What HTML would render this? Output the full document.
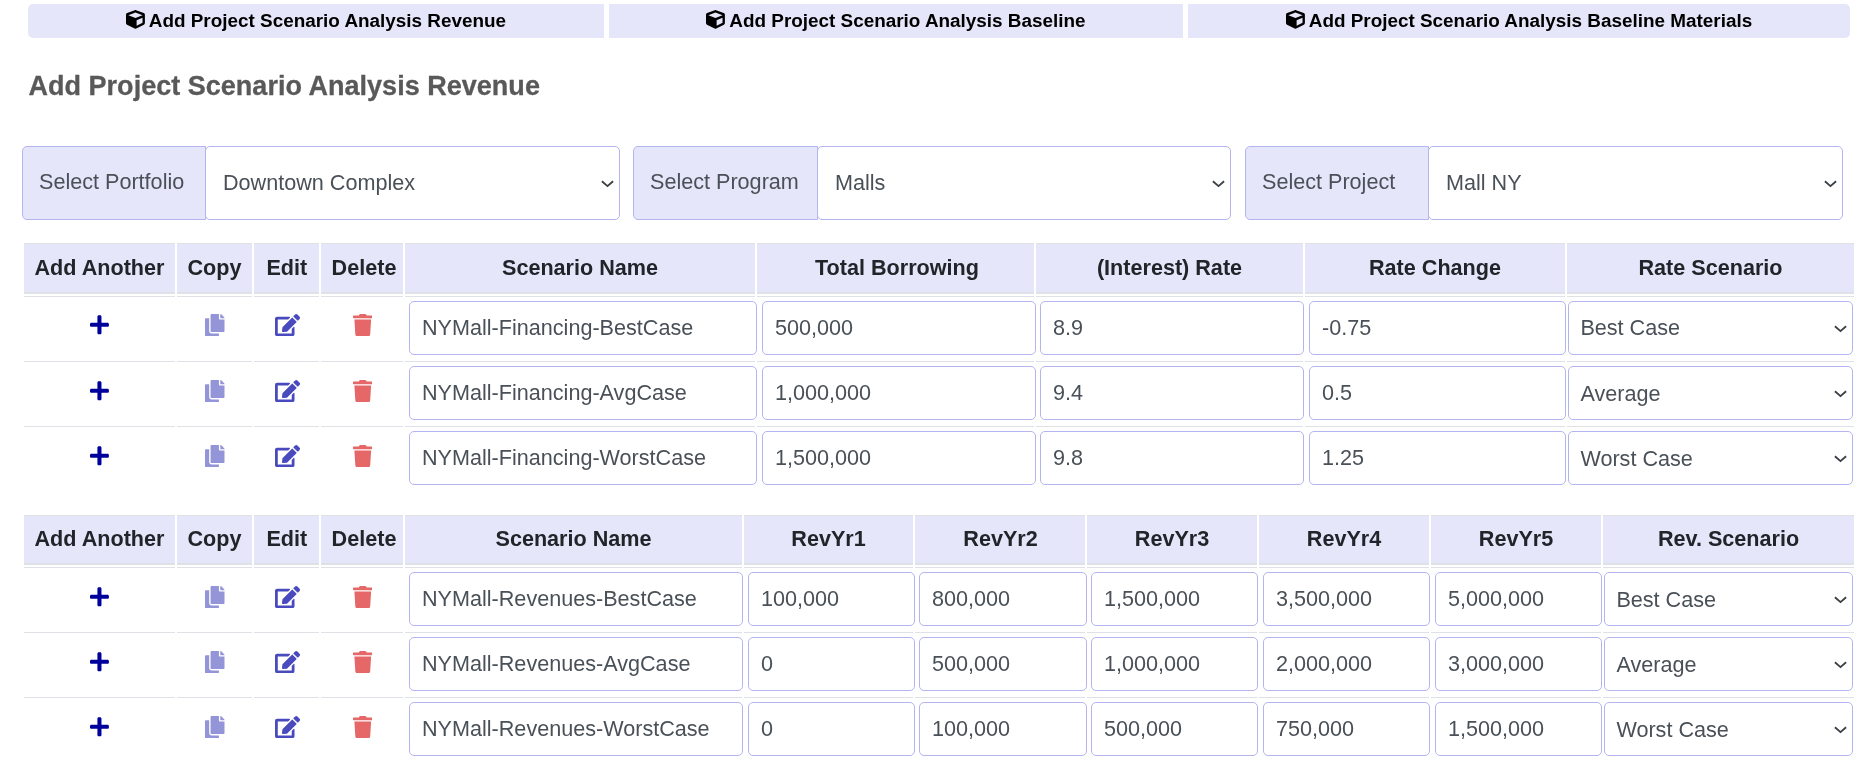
<!DOCTYPE html>
<html lang="en"><head><meta charset="utf-8"><title>Add Project Scenario Analysis Revenue</title>
<style>
*{box-sizing:border-box}
html,body{margin:0;padding:0}
body{width:1866px;height:766px;overflow:hidden;background:#fff;}
#app{position:absolute;left:0;top:0;width:1866px;height:766px;will-change:transform;font-family:"Liberation Sans",Arial,sans-serif;font-size:21.6px;color:#212529}
.ic{display:block}
.ic path{fill:currentColor}
.tabs{position:absolute;left:28px;top:4px;height:34px;display:flex;gap:5px}
.tab{height:34px;background:#e6e6fa;color:#000;font-weight:bold;font-size:18.9px;display:flex;align-items:center;justify-content:center;white-space:nowrap}
.tab .ic{margin-right:4px;position:relative;top:-1.6px}
.tab:first-child{border-radius:5px 0 0 5px}
.tab:last-child{border-radius:0 5px 5px 0}
h1{position:absolute;left:28.5px;top:67px;margin:0;font-size:27px;line-height:38px;font-weight:bold;color:#595959;white-space:nowrap;-webkit-text-stroke:0.3px #595959;letter-spacing:0.02px}
.grp{position:absolute;top:146px;height:74px;display:flex}
.grp .lbl{width:184px;height:74px;background:#e6e6fa;border:1px solid #b4b4f0;border-radius:5px 0 0 5px;color:#495057;padding-left:16px;line-height:70px;white-space:nowrap}
.grp .sel{position:relative;margin-left:-1px;flex:1;height:74px;background:#fff;border:1px solid #b4b4f0;border-radius:5px;color:#495057;padding-left:17px;line-height:72px;white-space:nowrap}
.chev{position:absolute;right:5px;top:50%;margin-top:-3px}
table{position:absolute;left:22px;border-collapse:separate;border-spacing:2px;table-layout:fixed;margin:0}
th{background:#e6e6fa;border-top:1px solid #dee2e6;border-bottom:2px solid #dee2e6;height:51px;padding:0;font-weight:bold;text-align:center;line-height:30px;color:#212529;white-space:nowrap;vertical-align:middle}
td{border-top:1px solid #dee2e6;height:63px;padding:0;position:relative;vertical-align:top}
td .ic{margin:18px auto 0}
tr.r0 td .ic{margin-top:17px}
.plus{color:#00009c}
td .copy{position:relative;left:.5px}td .edit{position:relative;left:1.2px}td .trash{position:relative;left:.4px}.copy{color:#9494d8}.edit{color:#4a4abf}.trash{color:#e66767}
.inp{position:absolute;left:4px;top:4px;height:54px;background:#fff;border:1px solid #b4b4f0;border-radius:5px;color:#495057;padding-left:12px;line-height:52px;white-space:nowrap;overflow:hidden}
.inp.s{padding-left:11.4px;line-height:54px}
tr.r0 .inp.s{line-height:52px}
.inp .chev{right:5px}
</style></head>
<body>
<div id="app">
<div class="tabs"><div class="tab" style="width:576px"><svg class="ic " viewBox="0 0 512 512" width="18.90" height="18.90"><path d="M239.1 6.3l-208 78c-18.7 7-31.1 25-31.1 45v225.1c0 18.2 10.3 34.8 26.5 42.9l208 104c13.5 6.8 29.4 6.8 42.9 0l208-104c16.300-8.1 26.5-24.8 26.5-42.9V129.300c0-20-12.400-37.900-31.100-44.900l-208-78C262 2.200 250 2.200 239.100 6.300zM256 68.400l192 72v1.100l-192 78-192-78v-1.100l192-72zm32 356V275.500l160-65v133.900l-160 80z"/></svg><span>Add Project Scenario Analysis Revenue</span></div><div class="tab" style="width:574px"><svg class="ic " viewBox="0 0 512 512" width="18.90" height="18.90"><path d="M239.1 6.3l-208 78c-18.7 7-31.1 25-31.1 45v225.1c0 18.2 10.3 34.8 26.5 42.9l208 104c13.5 6.8 29.4 6.8 42.9 0l208-104c16.300-8.1 26.5-24.8 26.5-42.9V129.300c0-20-12.400-37.900-31.100-44.900l-208-78C262 2.200 250 2.200 239.100 6.300zM256 68.400l192 72v1.100l-192 78-192-78v-1.100l192-72zm32 356V275.500l160-65v133.900l-160 80z"/></svg><span>Add Project Scenario Analysis Baseline</span></div><div class="tab" style="width:662px"><svg class="ic " viewBox="0 0 512 512" width="18.90" height="18.90"><path d="M239.1 6.3l-208 78c-18.7 7-31.1 25-31.1 45v225.1c0 18.2 10.3 34.8 26.5 42.9l208 104c13.5 6.8 29.4 6.8 42.9 0l208-104c16.300-8.1 26.5-24.8 26.5-42.9V129.300c0-20-12.400-37.900-31.100-44.900l-208-78C262 2.200 250 2.200 239.100 6.300zM256 68.400l192 72v1.100l-192 78-192-78v-1.100l192-72zm32 356V275.500l160-65v133.900l-160 80z"/></svg><span>Add Project Scenario Analysis Baseline Materials</span></div></div>
<h1>Add Project Scenario Analysis Revenue</h1>
<div class="grp" style="left:22px;width:598px"><div class="lbl" style="width:184px">Select Portfolio</div><div class="sel">Downtown Complex<svg class="chev" viewBox="0 0 13 8" width="13" height="8"><path d="M0.9 1.3 L6.5 6.1 L12.1 1.3" fill="none" stroke="#3a4046" stroke-width="1.9" stroke-linecap="butt" stroke-linejoin="miter"/></svg></div></div>
<div class="grp" style="left:633px;width:598px"><div class="lbl" style="width:185px">Select Program</div><div class="sel">Malls<svg class="chev" viewBox="0 0 13 8" width="13" height="8"><path d="M0.9 1.3 L6.5 6.1 L12.1 1.3" fill="none" stroke="#3a4046" stroke-width="1.9" stroke-linecap="butt" stroke-linejoin="miter"/></svg></div></div>
<div class="grp" style="left:1245px;width:598px"><div class="lbl" style="width:184px">Select Project</div><div class="sel">Mall NY<svg class="chev" viewBox="0 0 13 8" width="13" height="8"><path d="M0.9 1.3 L6.5 6.1 L12.1 1.3" fill="none" stroke="#3a4046" stroke-width="1.9" stroke-linecap="butt" stroke-linejoin="miter"/></svg></div></div>
<table style="top:241px"><colgroup><col style="width:151px"><col style="width:75px"><col style="width:65px"><col style="width:82px"><col style="width:350px"><col style="width:277px"><col style="width:267px"><col style="width:260px"><col style="width:287px"></colgroup>
<thead><tr><th style="height:51px;">Add Another</th><th style="height:51px;">Copy</th><th style="height:51px;padding-left:.6px">Edit</th><th style="height:51px;padding-left:4px">Delete</th><th style="height:51px;">Scenario Name</th><th style="height:51px;padding-left:3px">Total Borrowing</th><th style="height:51px;">(Interest) Rate</th><th style="height:51px;">Rate Change</th><th style="height:51px;">Rate Scenario</th></tr></thead>
<tbody>
<tr class="r0"><td><svg class="ic plus" viewBox="0 0 448 512" width="18.90" height="21.60"><path d="M416 208H272V64c0-17.67-14.33-32-32-32h-32c-17.67 0-32 14.33-32 32v144H32c-17.67 0-32 14.33-32 32v32c0 17.67 14.33 32 32 32h144v144c0 17.67 14.33 32 32 32h32c17.67 0 32-14.33 32-32V304h144c17.67 0 32-14.33 32-32v-32c0-17.67-14.33-32-32-32z"/></svg></td><td><svg class="ic copy" viewBox="0 0 448 512" width="19.51" height="22.30"><path d="M320 448v40c0 13.255-10.745 24-24 24H24c-13.255 0-24-10.745-24-24V120c0-13.255 10.745-24 24-24h72v296c0 30.879 25.121 56 56 56h168zm0-344V0H152c-13.255 0-24 10.745-24 24v368c0 13.255 10.745 24 24 24h272c13.255 0 24-10.745 24-24V128H344c-13.200 0-24-10.800-24-24zm120.971-31.029L375.029 7.029A24 24 0 0 0 358.059 0H352v96h96v-6.059a24 24 0 0 0-7.029-16.970z"/></svg></td><td><svg class="ic edit" viewBox="0 0 576 512" width="25.09" height="22.30"><path d="M402.600 83.200l90.200 90.200c3.800 3.800 3.800 10 0 13.800L274.400 405.600l-92.800 10.300c-12.400 1.400-22.900-9.100-21.500-21.500l10.300-92.800L388.800 83.200c3.800-3.800 10-3.800 13.800 0zm162-22.900l-48.800-48.800c-15.200-15.200-39.900-15.200-55.200 0l-35.400 35.400c-3.800 3.800-3.800 10 0 13.800l90.200 90.200c3.800 3.800 10 3.800 13.800 0l35.400-35.400c15.200-15.300 15.200-40 0-55.200zM384 346.200V448H64V128h229.800c3.200 0 6.200-1.300 8.500-3.500l40-40c7.600-7.600 2.200-20.500-8.500-20.500H48C21.500 64 0 85.500 0 112v352c0 26.500 21.500 48 48 48h352c26.500 0 48-21.500 48-48V306.200c0-10.700-12.900-16-20.500-8.500l-40 40c-2.200 2.300-3.500 5.300-3.500 8.500z"/></svg></td><td><svg class="ic trash" viewBox="0 0 448 512" width="19.51" height="22.30"><path d="M432 32H312l-9.400-18.700A24 24 0 0 0 281.100 0H166.800a23.720 23.720 0 0 0-21.400 13.300L136 32H16A16 16 0 0 0 0 48v32a16 16 0 0 0 16 16h416a16 16 0 0 0 16-16V48a16 16 0 0 0-16-16zM53.200 467a48 48 0 0 0 47.900 45h245.800a48 48 0 0 0 47.900-45L416 128H32z"/></svg></td><td><div class="inp" style="left:4px;width:348px">NYMall-Financing-BestCase</div></td><td><div class="inp" style="left:5px;width:274px">500,000</div></td><td><div class="inp" style="left:4px;width:264px">8.9</div></td><td><div class="inp" style="left:4px;width:257px">-0.75</div></td><td><div class="inp s" style="left:1px;width:285px">Best Case<svg class="chev" viewBox="0 0 13 8" width="13" height="8"><path d="M0.9 1.3 L6.5 6.1 L12.1 1.3" fill="none" stroke="#3a4046" stroke-width="1.9" stroke-linecap="butt" stroke-linejoin="miter"/></svg></div></td></tr>
<tr><td><svg class="ic plus" viewBox="0 0 448 512" width="18.90" height="21.60"><path d="M416 208H272V64c0-17.67-14.33-32-32-32h-32c-17.67 0-32 14.33-32 32v144H32c-17.67 0-32 14.33-32 32v32c0 17.67 14.33 32 32 32h144v144c0 17.67 14.33 32 32 32h32c17.67 0 32-14.33 32-32V304h144c17.67 0 32-14.33 32-32v-32c0-17.67-14.33-32-32-32z"/></svg></td><td><svg class="ic copy" viewBox="0 0 448 512" width="19.51" height="22.30"><path d="M320 448v40c0 13.255-10.745 24-24 24H24c-13.255 0-24-10.745-24-24V120c0-13.255 10.745-24 24-24h72v296c0 30.879 25.121 56 56 56h168zm0-344V0H152c-13.255 0-24 10.745-24 24v368c0 13.255 10.745 24 24 24h272c13.255 0 24-10.745 24-24V128H344c-13.200 0-24-10.800-24-24zm120.971-31.029L375.029 7.029A24 24 0 0 0 358.059 0H352v96h96v-6.059a24 24 0 0 0-7.029-16.970z"/></svg></td><td><svg class="ic edit" viewBox="0 0 576 512" width="25.09" height="22.30"><path d="M402.600 83.200l90.200 90.200c3.800 3.800 3.800 10 0 13.800L274.400 405.600l-92.800 10.300c-12.400 1.400-22.900-9.100-21.500-21.500l10.300-92.800L388.800 83.200c3.800-3.800 10-3.800 13.800 0zm162-22.900l-48.800-48.800c-15.200-15.200-39.900-15.200-55.200 0l-35.400 35.400c-3.800 3.800-3.800 10 0 13.800l90.200 90.200c3.800 3.800 10 3.800 13.800 0l35.400-35.400c15.200-15.300 15.200-40 0-55.200zM384 346.200V448H64V128h229.800c3.200 0 6.200-1.300 8.500-3.500l40-40c7.600-7.600 2.200-20.500-8.500-20.500H48C21.500 64 0 85.500 0 112v352c0 26.500 21.500 48 48 48h352c26.500 0 48-21.500 48-48V306.200c0-10.700-12.900-16-20.500-8.500l-40 40c-2.200 2.300-3.500 5.300-3.500 8.500z"/></svg></td><td><svg class="ic trash" viewBox="0 0 448 512" width="19.51" height="22.30"><path d="M432 32H312l-9.400-18.700A24 24 0 0 0 281.100 0H166.800a23.720 23.720 0 0 0-21.400 13.300L136 32H16A16 16 0 0 0 0 48v32a16 16 0 0 0 16 16h416a16 16 0 0 0 16-16V48a16 16 0 0 0-16-16zM53.200 467a48 48 0 0 0 47.900 45h245.800a48 48 0 0 0 47.900-45L416 128H32z"/></svg></td><td><div class="inp" style="left:4px;width:348px">NYMall-Financing-AvgCase</div></td><td><div class="inp" style="left:5px;width:274px">1,000,000</div></td><td><div class="inp" style="left:4px;width:264px">9.4</div></td><td><div class="inp" style="left:4px;width:257px">0.5</div></td><td><div class="inp s" style="left:1px;width:285px">Average<svg class="chev" viewBox="0 0 13 8" width="13" height="8"><path d="M0.9 1.3 L6.5 6.1 L12.1 1.3" fill="none" stroke="#3a4046" stroke-width="1.9" stroke-linecap="butt" stroke-linejoin="miter"/></svg></div></td></tr>
<tr><td><svg class="ic plus" viewBox="0 0 448 512" width="18.90" height="21.60"><path d="M416 208H272V64c0-17.67-14.33-32-32-32h-32c-17.67 0-32 14.33-32 32v144H32c-17.67 0-32 14.33-32 32v32c0 17.67 14.33 32 32 32h144v144c0 17.67 14.33 32 32 32h32c17.67 0 32-14.33 32-32V304h144c17.67 0 32-14.33 32-32v-32c0-17.67-14.33-32-32-32z"/></svg></td><td><svg class="ic copy" viewBox="0 0 448 512" width="19.51" height="22.30"><path d="M320 448v40c0 13.255-10.745 24-24 24H24c-13.255 0-24-10.745-24-24V120c0-13.255 10.745-24 24-24h72v296c0 30.879 25.121 56 56 56h168zm0-344V0H152c-13.255 0-24 10.745-24 24v368c0 13.255 10.745 24 24 24h272c13.255 0 24-10.745 24-24V128H344c-13.200 0-24-10.800-24-24zm120.971-31.029L375.029 7.029A24 24 0 0 0 358.059 0H352v96h96v-6.059a24 24 0 0 0-7.029-16.970z"/></svg></td><td><svg class="ic edit" viewBox="0 0 576 512" width="25.09" height="22.30"><path d="M402.600 83.200l90.200 90.200c3.800 3.800 3.800 10 0 13.800L274.400 405.600l-92.800 10.300c-12.400 1.400-22.900-9.100-21.500-21.500l10.300-92.800L388.800 83.200c3.800-3.800 10-3.800 13.800 0zm162-22.900l-48.800-48.800c-15.200-15.200-39.900-15.200-55.200 0l-35.400 35.400c-3.800 3.800-3.800 10 0 13.800l90.200 90.200c3.800 3.800 10 3.800 13.800 0l35.400-35.400c15.200-15.300 15.200-40 0-55.200zM384 346.200V448H64V128h229.800c3.200 0 6.200-1.300 8.500-3.500l40-40c7.600-7.600 2.200-20.500-8.500-20.500H48C21.500 64 0 85.500 0 112v352c0 26.500 21.500 48 48 48h352c26.500 0 48-21.500 48-48V306.200c0-10.700-12.900-16-20.500-8.500l-40 40c-2.200 2.300-3.500 5.300-3.500 8.500z"/></svg></td><td><svg class="ic trash" viewBox="0 0 448 512" width="19.51" height="22.30"><path d="M432 32H312l-9.400-18.700A24 24 0 0 0 281.100 0H166.800a23.720 23.720 0 0 0-21.400 13.300L136 32H16A16 16 0 0 0 0 48v32a16 16 0 0 0 16 16h416a16 16 0 0 0 16-16V48a16 16 0 0 0-16-16zM53.200 467a48 48 0 0 0 47.900 45h245.800a48 48 0 0 0 47.900-45L416 128H32z"/></svg></td><td><div class="inp" style="left:4px;width:348px">NYMall-Financing-WorstCase</div></td><td><div class="inp" style="left:5px;width:274px">1,500,000</div></td><td><div class="inp" style="left:4px;width:264px">9.8</div></td><td><div class="inp" style="left:4px;width:257px">1.25</div></td><td><div class="inp s" style="left:1px;width:285px">Worst Case<svg class="chev" viewBox="0 0 13 8" width="13" height="8"><path d="M0.9 1.3 L6.5 6.1 L12.1 1.3" fill="none" stroke="#3a4046" stroke-width="1.9" stroke-linecap="butt" stroke-linejoin="miter"/></svg></div></td></tr>
</tbody></table>
<table style="top:513px"><colgroup><col style="width:151px"><col style="width:75px"><col style="width:65px"><col style="width:82px"><col style="width:337px"><col style="width:169px"><col style="width:170px"><col style="width:170px"><col style="width:170px"><col style="width:170px"><col style="width:251px"></colgroup>
<thead><tr><th style="height:50px;padding-bottom:2px;">Add Another</th><th style="height:50px;padding-bottom:2px;">Copy</th><th style="height:50px;padding-bottom:2px;padding-left:.6px">Edit</th><th style="height:50px;padding-bottom:2px;padding-left:4px">Delete</th><th style="height:50px;padding-bottom:2px;">Scenario Name</th><th style="height:50px;padding-bottom:2px;">RevYr1</th><th style="height:50px;padding-bottom:2px;padding-left:1px">RevYr2</th><th style="height:50px;padding-bottom:2px;">RevYr3</th><th style="height:50px;padding-bottom:2px;">RevYr4</th><th style="height:50px;padding-bottom:2px;">RevYr5</th><th style="height:50px;padding-bottom:2px;">Rev. Scenario</th></tr></thead>
<tbody>
<tr><td><svg class="ic plus" viewBox="0 0 448 512" width="18.90" height="21.60"><path d="M416 208H272V64c0-17.67-14.33-32-32-32h-32c-17.67 0-32 14.33-32 32v144H32c-17.67 0-32 14.33-32 32v32c0 17.67 14.33 32 32 32h144v144c0 17.67 14.33 32 32 32h32c17.67 0 32-14.33 32-32V304h144c17.67 0 32-14.33 32-32v-32c0-17.67-14.33-32-32-32z"/></svg></td><td><svg class="ic copy" viewBox="0 0 448 512" width="19.51" height="22.30"><path d="M320 448v40c0 13.255-10.745 24-24 24H24c-13.255 0-24-10.745-24-24V120c0-13.255 10.745-24 24-24h72v296c0 30.879 25.121 56 56 56h168zm0-344V0H152c-13.255 0-24 10.745-24 24v368c0 13.255 10.745 24 24 24h272c13.255 0 24-10.745 24-24V128H344c-13.200 0-24-10.800-24-24zm120.971-31.029L375.029 7.029A24 24 0 0 0 358.059 0H352v96h96v-6.059a24 24 0 0 0-7.029-16.970z"/></svg></td><td><svg class="ic edit" viewBox="0 0 576 512" width="25.09" height="22.30"><path d="M402.600 83.200l90.200 90.200c3.800 3.800 3.800 10 0 13.800L274.400 405.600l-92.800 10.300c-12.400 1.400-22.900-9.100-21.500-21.500l10.300-92.800L388.800 83.200c3.800-3.800 10-3.800 13.800 0zm162-22.900l-48.800-48.800c-15.200-15.200-39.900-15.200-55.200 0l-35.400 35.400c-3.800 3.800-3.800 10 0 13.800l90.200 90.200c3.800 3.800 10 3.800 13.800 0l35.400-35.400c15.200-15.300 15.200-40 0-55.200zM384 346.200V448H64V128h229.800c3.200 0 6.200-1.300 8.500-3.500l40-40c7.600-7.600 2.200-20.500-8.500-20.500H48C21.500 64 0 85.500 0 112v352c0 26.500 21.500 48 48 48h352c26.500 0 48-21.500 48-48V306.200c0-10.700-12.900-16-20.500-8.500l-40 40c-2.200 2.300-3.500 5.300-3.500 8.500z"/></svg></td><td><svg class="ic trash" viewBox="0 0 448 512" width="19.51" height="22.30"><path d="M432 32H312l-9.400-18.700A24 24 0 0 0 281.100 0H166.800a23.720 23.720 0 0 0-21.400 13.300L136 32H16A16 16 0 0 0 0 48v32a16 16 0 0 0 16 16h416a16 16 0 0 0 16-16V48a16 16 0 0 0-16-16zM53.200 467a48 48 0 0 0 47.900 45h245.800a48 48 0 0 0 47.900-45L416 128H32z"/></svg></td><td><div class="inp" style="left:4px;width:334px">NYMall-Revenues-BestCase</div></td><td><div class="inp" style="left:4px;width:167px">100,000</div></td><td><div class="inp" style="left:4px;width:168px">800,000</div></td><td><div class="inp" style="left:4px;width:167px">1,500,000</div></td><td><div class="inp" style="left:4px;width:167px">3,500,000</div></td><td><div class="inp" style="left:4px;width:167px">5,000,000</div></td><td><div class="inp s" style="left:1px;width:249px">Best Case<svg class="chev" viewBox="0 0 13 8" width="13" height="8"><path d="M0.9 1.3 L6.5 6.1 L12.1 1.3" fill="none" stroke="#3a4046" stroke-width="1.9" stroke-linecap="butt" stroke-linejoin="miter"/></svg></div></td></tr>
<tr><td><svg class="ic plus" viewBox="0 0 448 512" width="18.90" height="21.60"><path d="M416 208H272V64c0-17.67-14.33-32-32-32h-32c-17.67 0-32 14.33-32 32v144H32c-17.67 0-32 14.33-32 32v32c0 17.67 14.33 32 32 32h144v144c0 17.67 14.33 32 32 32h32c17.67 0 32-14.33 32-32V304h144c17.67 0 32-14.33 32-32v-32c0-17.67-14.33-32-32-32z"/></svg></td><td><svg class="ic copy" viewBox="0 0 448 512" width="19.51" height="22.30"><path d="M320 448v40c0 13.255-10.745 24-24 24H24c-13.255 0-24-10.745-24-24V120c0-13.255 10.745-24 24-24h72v296c0 30.879 25.121 56 56 56h168zm0-344V0H152c-13.255 0-24 10.745-24 24v368c0 13.255 10.745 24 24 24h272c13.255 0 24-10.745 24-24V128H344c-13.200 0-24-10.800-24-24zm120.971-31.029L375.029 7.029A24 24 0 0 0 358.059 0H352v96h96v-6.059a24 24 0 0 0-7.029-16.970z"/></svg></td><td><svg class="ic edit" viewBox="0 0 576 512" width="25.09" height="22.30"><path d="M402.600 83.200l90.200 90.200c3.800 3.800 3.800 10 0 13.800L274.400 405.600l-92.800 10.300c-12.400 1.400-22.900-9.100-21.500-21.500l10.300-92.800L388.800 83.200c3.800-3.800 10-3.800 13.800 0zm162-22.900l-48.800-48.800c-15.200-15.200-39.900-15.200-55.200 0l-35.400 35.400c-3.800 3.800-3.800 10 0 13.800l90.200 90.200c3.800 3.800 10 3.800 13.800 0l35.400-35.400c15.200-15.300 15.200-40 0-55.200zM384 346.200V448H64V128h229.800c3.200 0 6.200-1.300 8.500-3.500l40-40c7.600-7.600 2.200-20.500-8.500-20.500H48C21.500 64 0 85.500 0 112v352c0 26.500 21.500 48 48 48h352c26.500 0 48-21.500 48-48V306.200c0-10.700-12.900-16-20.500-8.500l-40 40c-2.200 2.300-3.500 5.300-3.500 8.500z"/></svg></td><td><svg class="ic trash" viewBox="0 0 448 512" width="19.51" height="22.30"><path d="M432 32H312l-9.400-18.700A24 24 0 0 0 281.100 0H166.800a23.720 23.720 0 0 0-21.400 13.300L136 32H16A16 16 0 0 0 0 48v32a16 16 0 0 0 16 16h416a16 16 0 0 0 16-16V48a16 16 0 0 0-16-16zM53.200 467a48 48 0 0 0 47.900 45h245.800a48 48 0 0 0 47.900-45L416 128H32z"/></svg></td><td><div class="inp" style="left:4px;width:334px">NYMall-Revenues-AvgCase</div></td><td><div class="inp" style="left:4px;width:167px">0</div></td><td><div class="inp" style="left:4px;width:168px">500,000</div></td><td><div class="inp" style="left:4px;width:167px">1,000,000</div></td><td><div class="inp" style="left:4px;width:167px">2,000,000</div></td><td><div class="inp" style="left:4px;width:167px">3,000,000</div></td><td><div class="inp s" style="left:1px;width:249px">Average<svg class="chev" viewBox="0 0 13 8" width="13" height="8"><path d="M0.9 1.3 L6.5 6.1 L12.1 1.3" fill="none" stroke="#3a4046" stroke-width="1.9" stroke-linecap="butt" stroke-linejoin="miter"/></svg></div></td></tr>
<tr><td><svg class="ic plus" viewBox="0 0 448 512" width="18.90" height="21.60"><path d="M416 208H272V64c0-17.67-14.33-32-32-32h-32c-17.67 0-32 14.33-32 32v144H32c-17.67 0-32 14.33-32 32v32c0 17.67 14.33 32 32 32h144v144c0 17.67 14.33 32 32 32h32c17.67 0 32-14.33 32-32V304h144c17.67 0 32-14.33 32-32v-32c0-17.67-14.33-32-32-32z"/></svg></td><td><svg class="ic copy" viewBox="0 0 448 512" width="19.51" height="22.30"><path d="M320 448v40c0 13.255-10.745 24-24 24H24c-13.255 0-24-10.745-24-24V120c0-13.255 10.745-24 24-24h72v296c0 30.879 25.121 56 56 56h168zm0-344V0H152c-13.255 0-24 10.745-24 24v368c0 13.255 10.745 24 24 24h272c13.255 0 24-10.745 24-24V128H344c-13.200 0-24-10.800-24-24zm120.971-31.029L375.029 7.029A24 24 0 0 0 358.059 0H352v96h96v-6.059a24 24 0 0 0-7.029-16.970z"/></svg></td><td><svg class="ic edit" viewBox="0 0 576 512" width="25.09" height="22.30"><path d="M402.600 83.200l90.200 90.200c3.800 3.800 3.800 10 0 13.800L274.400 405.600l-92.800 10.300c-12.400 1.400-22.900-9.100-21.500-21.500l10.300-92.800L388.800 83.200c3.800-3.800 10-3.800 13.800 0zm162-22.900l-48.800-48.800c-15.200-15.200-39.900-15.200-55.200 0l-35.400 35.400c-3.800 3.800-3.800 10 0 13.800l90.200 90.200c3.800 3.800 10 3.800 13.800 0l35.400-35.400c15.200-15.300 15.200-40 0-55.200zM384 346.200V448H64V128h229.800c3.200 0 6.200-1.300 8.500-3.500l40-40c7.600-7.600 2.200-20.500-8.500-20.500H48C21.500 64 0 85.500 0 112v352c0 26.500 21.500 48 48 48h352c26.500 0 48-21.500 48-48V306.200c0-10.700-12.900-16-20.500-8.500l-40 40c-2.200 2.300-3.500 5.300-3.500 8.500z"/></svg></td><td><svg class="ic trash" viewBox="0 0 448 512" width="19.51" height="22.30"><path d="M432 32H312l-9.400-18.700A24 24 0 0 0 281.100 0H166.800a23.720 23.720 0 0 0-21.400 13.300L136 32H16A16 16 0 0 0 0 48v32a16 16 0 0 0 16 16h416a16 16 0 0 0 16-16V48a16 16 0 0 0-16-16zM53.200 467a48 48 0 0 0 47.900 45h245.800a48 48 0 0 0 47.900-45L416 128H32z"/></svg></td><td><div class="inp" style="left:4px;width:334px">NYMall-Revenues-WorstCase</div></td><td><div class="inp" style="left:4px;width:167px">0</div></td><td><div class="inp" style="left:4px;width:168px">100,000</div></td><td><div class="inp" style="left:4px;width:167px">500,000</div></td><td><div class="inp" style="left:4px;width:167px">750,000</div></td><td><div class="inp" style="left:4px;width:167px">1,500,000</div></td><td><div class="inp s" style="left:1px;width:249px">Worst Case<svg class="chev" viewBox="0 0 13 8" width="13" height="8"><path d="M0.9 1.3 L6.5 6.1 L12.1 1.3" fill="none" stroke="#3a4046" stroke-width="1.9" stroke-linecap="butt" stroke-linejoin="miter"/></svg></div></td></tr>
</tbody></table>
</div>
</body></html>
